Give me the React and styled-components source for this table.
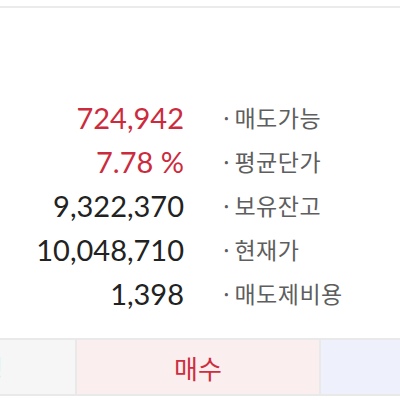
import React from "react";
import styled, { createGlobalStyle } from "styled-components";

const GlobalStyle = createGlobalStyle`
  html, body {
    margin: 0;
    padding: 0;
    background: #ffffff;
    width: 400px;
    height: 400px;
    overflow: hidden;
  }
`;

const Screen = styled.div`
  width: 400px;
  height: 400px;
  display: flex;
  flex-direction: column;
  background: #fff;
  font-family: Lato, "Noto Sans CJK KR", sans-serif;
`;

const TopRule = styled.div`
  margin-top: 6px;
  height: 2px;
  background: #ebebeb;
`;

const InfoList = styled.div`
  margin-top: 87px;
  display: flex;
  flex-direction: column;
`;

const InfoRow = styled.div`
  display: grid;
  grid-template-columns: 184px 1fr;
  column-gap: 36px;
  align-items: center;
  height: 44px;
`;

const Value = styled.span`
  text-align: right;
  font-family: Lato, sans-serif;
  font-size: 29px;
  color: ${(p) => (p.$up ? "#cb2b3d" : "#222222")};
`;

const Label = styled.span`
  font-family: "Noto Sans CJK KR", sans-serif;
  font-size: 23px;
  letter-spacing: 0.5px;
  color: #5e5e5e;
  &::before {
    content: "·";
    margin-right: 1px;
  }
`;

const TabBar = styled.div`
  margin-top: 23px;
  display: grid;
  grid-template-columns: 75px 242px 1fr;
  column-gap: 2px;
  background: #e9e9e9;
  border-top: 2px solid #e9e9e9;
  border-bottom: 2px solid #e9e9e9;
`;

const Tab = styled.div`
  height: 54px;
  display: flex;
  align-items: center;
  justify-content: ${(p) => (p.$clipped ? "flex-end" : "center")};
  overflow: hidden;
  background: ${(p) => p.$bg};
  color: ${(p) => p.$color || "#333"};
  font-family: "Noto Sans CJK KR", sans-serif;
  font-size: 26px;
  white-space: nowrap;
  ${(p) => p.$clipped && "padding-right: 72px;"}
`;

const TabText = styled.span`
  flex-shrink: 0;
`;

const rows = [
  { value: "724,942", label: "매도가능", up: true },
  { value: "7.78 %", label: "평균단가", up: true },
  { value: "9,322,370", label: "보유잔고" },
  { value: "10,048,710", label: "현재가" },
  { value: "1,398", label: "매도제비용" },
];

export default function App() {
  return (
    <Screen>
      <GlobalStyle />
      <TopRule />
      <InfoList>
        {rows.map((r) => (
          <InfoRow key={r.label}>
            <Value $up={r.up}>{r.value}</Value>
            <Label>{r.label}</Label>
          </InfoRow>
        ))}
      </InfoList>
      <TabBar>
        <Tab $bg="#f6f6f6" $clipped>
          <TabText>정정</TabText>
        </Tab>
        <Tab $bg="#fbeeee" $color="#cc2f3f">
          <TabText>매수</TabText>
        </Tab>
        <Tab $bg="#eef0fc" $color="#2f55c8" />
      </TabBar>
    </Screen>
  );
}
